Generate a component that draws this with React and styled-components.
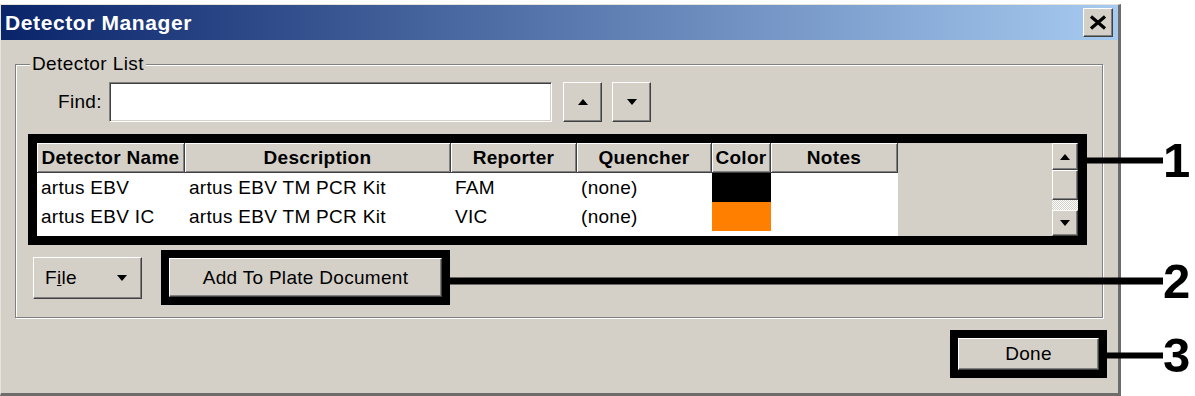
import React from 'react'
import styled, { createGlobalStyle } from 'styled-components'

const columns = [
  { title: 'Detector Name', width: 148 },
  { title: 'Description', width: 266 },
  { title: 'Reporter', width: 126 },
  { title: 'Quencher', width: 135 },
  { title: 'Color', width: 59 },
  { title: 'Notes', width: 127 },
]

const detectors = [
  { name: 'artus EBV', description: 'artus EBV TM PCR Kit', reporter: 'FAM', quencher: '(none)', color: '#000000' },
  { name: 'artus EBV IC', description: 'artus EBV TM PCR Kit', reporter: 'VIC', quencher: '(none)', color: '#ff8000' },
]

const GRID = columns.map((c) => `${c.width}px`).join(' ')

const Callout = ({ number, border = 8, lineTop, lineWidth, thickness = 6, children }) => (
  <CalloutFrame $border={border}>
    {children}
    <Leader $border={border} $top={lineTop}>
      <LeaderLine $width={lineWidth} $thickness={thickness} />
      <LeaderNumber>{number}</LeaderNumber>
    </Leader>
  </CalloutFrame>
)

const App = () => {
  return (
    <Page>
      <GlobalStyle />
      <Window>
        <TitleBar>
          <TitleText>Detector Manager</TitleText>
          <CloseButton>
            <svg width="18" height="15" viewBox="0 0 18 15">
              <path d="M2 1.5 L16 13.5 M16 1.5 L2 13.5" stroke="#000" strokeWidth="3.2" fill="none" />
            </svg>
          </CloseButton>
        </TitleBar>

        <Body>
          <GroupBox>
            <GroupLegend>Detector List</GroupLegend>

            <FindRow>
              <FindLabel>Find:</FindLabel>
              <FindInput readOnly value="" />
              <SpinButton>
                <Arrow $dir="up" />
              </SpinButton>
              <SpinButton>
                <Arrow $dir="down" />
              </SpinButton>
            </FindRow>

            <ListSlot>
              <Callout number="1" border={9} lineTop={17} lineWidth={76} thickness={6}>
                <ListFrame>
                  <TableArea>
                    <Columns>
                      <HeaderRow>
                        {columns.map((c) => (
                          <HeaderCell key={c.title}>{c.title}</HeaderCell>
                        ))}
                      </HeaderRow>
                      {detectors.map((d) => (
                        <DataRow key={d.name}>
                          <DataCell>{d.name}</DataCell>
                          <DataCell>{d.description}</DataCell>
                          <DataCell>{d.reporter}</DataCell>
                          <DataCell>{d.quencher}</DataCell>
                          <Swatch $color={d.color} />
                          <DataCell />
                        </DataRow>
                      ))}
                    </Columns>
                    <Filler />
                  </TableArea>
                  <ScrollBar>
                    <ScrollButton $h={27}>
                      <Arrow $dir="up" />
                    </ScrollButton>
                    <ScrollThumb />
                    <ScrollTrack />
                    <ScrollButton $h={26}>
                      <Arrow $dir="down" />
                    </ScrollButton>
                  </ScrollBar>
                </ListFrame>
              </Callout>
            </ListSlot>

            <ActionRow>
              <FileButton>
                <span>
                  F<u>i</u>le
                </span>
                <Arrow $dir="down" $w={11} />
              </FileButton>
              <Callout number="2" border={8} lineTop={23} lineWidth={713} thickness={7}>
                <PushButton $w={273} $h={39}>Add To Plate Document</PushButton>
              </Callout>
            </ActionRow>
          </GroupBox>

          <FooterRow>
            <Callout number="3" border={8} lineTop={17} lineWidth={56} thickness={6}>
              <PushButton $w={141} $h={32}>Done</PushButton>
            </Callout>
          </FooterRow>
        </Body>
      </Window>
    </Page>
  )
}

export default App

const GlobalStyle = createGlobalStyle`
  html, body {
    margin: 0;
    padding: 0;
    background: #fff;
  }
  body {
    font-family: "Liberation Sans", Arial, sans-serif;
    color: #000;
  }
  * {
    box-sizing: border-box;
  }
`

const Page = styled.div`
  width: 1195px;
  height: 396px;
  padding-top: 4px;
  background: #fff;
  overflow: hidden;
`

const Window = styled.div`
  width: 1121px;
  height: 392px;
  display: flex;
  flex-direction: column;
  background: #d4d0c8;
  border-top: 1px solid #e6e3dc;
  border-left: 1px solid #e6e3dc;
  border-right: 3px solid #6c6c6c;
  border-bottom: 3px solid #6c6c6c;
`

const TitleBar = styled.div`
  height: 35px;
  flex-shrink: 0;
  display: flex;
  align-items: center;
  justify-content: space-between;
  padding: 0 5px 0 4px;
  background: linear-gradient(to right, #0a246a, #a6caf0);
`

const TitleText = styled.div`
  color: #fff;
  font-size: 21px;
  font-weight: bold;
  letter-spacing: 0.6px;
`

const raised = `
  background: #d4d0c8;
  border: 1px solid;
  border-color: #fff #404040 #404040 #fff;
  box-shadow: inset -1px -1px #808080;
`

const CloseButton = styled.div`
  ${raised}
  width: 30px;
  height: 29px;
  display: flex;
  align-items: center;
  justify-content: center;
`

const Body = styled.div`
  flex: 1;
  display: flex;
  flex-direction: column;
`

const GroupBox = styled.fieldset`
  margin: 14px 15px 0 14px;
  padding: 0 0 12px;
  min-inline-size: 0;
  border: 1px solid #808080;
  box-shadow: inset 1px 1px #fff, 1px 1px #fff;
`

const GroupLegend = styled.legend`
  margin-left: 14px;
  padding: 0 2px;
  font-size: 19px;
  line-height: 20px;
  letter-spacing: 0.4px;
  background: #d4d0c8;
`

const FindRow = styled.div`
  display: flex;
  align-items: center;
  margin: 8px 0 0 42px;
  height: 40px;
`

const FindLabel = styled.div`
  width: 43px;
  margin-right: 8px;
  font-size: 19px;
  letter-spacing: 0.3px;
`

const FindInput = styled.input`
  width: 443px;
  height: 40px;
  margin: 0 11px 0 0;
  background: #fff;
  border: 1px solid;
  border-color: #808080 #fff #fff #808080;
  box-shadow: inset 1px 1px #404040, inset -1px -1px #d4d0c8;
  outline: none;
`

const SpinButton = styled.div`
  ${raised}
  width: 39px;
  height: 40px;
  margin-right: 10px;
  display: flex;
  align-items: center;
  justify-content: center;
`

const Arrow = styled.span`
  display: block;
  width: 0;
  height: 0;
  border-left: ${(p) => (p.$w || 10) / 2}px solid transparent;
  border-right: ${(p) => (p.$w || 10) / 2}px solid transparent;
  ${(p) => (p.$dir === 'up' ? 'border-bottom: 6px solid #000;' : 'border-top: 6px solid #000;')}
`

const CalloutFrame = styled.div`
  position: relative;
  border: ${(p) => p.$border}px solid #000;
`

const Leader = styled.div`
  position: absolute;
  left: calc(100% + ${(p) => p.$border}px);
  top: ${(p) => p.$top}px;
  transform: translateY(-50%);
  display: flex;
  align-items: center;
`

const LeaderLine = styled.div`
  width: ${(p) => p.$width}px;
  height: ${(p) => p.$thickness}px;
  background: #000;
`

const LeaderNumber = styled.div`
  font-size: 49px;
  font-weight: bold;
  line-height: 1;
`

const ListSlot = styled.div`
  margin: 12px 0 0 12px;
  width: 1059px;
`

const ListFrame = styled.div`
  display: grid;
  grid-template-columns: 1fr 26px;
  height: 93px;
  background: #d4d0c8;
`

const TableArea = styled.div`
  display: flex;
`

const Columns = styled.div`
  width: 861px;
  background: #fff;
`

const HeaderRow = styled.div`
  display: grid;
  grid-template-columns: ${GRID};
  height: 30px;
  background: #d4d0c8;
`

const HeaderCell = styled.div`
  font-size: 19px;
  font-weight: bold;
  letter-spacing: 0.3px;
  line-height: 29px;
  text-align: center;
  white-space: nowrap;
  border-right: 1px solid #404040;
  border-bottom: 1px solid #404040;
  box-shadow: inset 1px 1px #fff, inset -1px -1px #808080;
`

const DataRow = styled.div`
  display: grid;
  grid-template-columns: ${GRID};
  height: 29px;
`

const DataCell = styled.div`
  padding-left: 4px;
  font-size: 19px;
  letter-spacing: 0.3px;
  line-height: 29px;
  white-space: nowrap;
  overflow: hidden;
`

const Swatch = styled.div`
  background: ${(p) => p.$color};
`

const Filler = styled.div`
  flex: 1;
  background: #d4d0c8;
`

const ScrollBar = styled.div`
  display: flex;
  flex-direction: column;
`

const ScrollButton = styled.div`
  ${raised}
  height: ${(p) => p.$h}px;
  display: flex;
  align-items: center;
  justify-content: center;
`

const ScrollThumb = styled.div`
  ${raised}
  height: 30px;
`

const ScrollTrack = styled.div`
  flex: 1;
  background: repeating-conic-gradient(#fff 0 25%, #d4d0c8 0 50%) 0 0 / 2px 2px;
`

const ActionRow = styled.div`
  display: flex;
  align-items: center;
  margin: 5px 0 0 17px;
`

const FileButton = styled.div`
  ${raised}
  width: 109px;
  height: 42px;
  margin-right: 19px;
  display: flex;
  align-items: center;
  justify-content: space-between;
  padding: 0 14px 0 11px;
  font-size: 19px;
  letter-spacing: 0.3px;
`

const PushButton = styled.div`
  ${raised}
  width: ${(p) => p.$w}px;
  height: ${(p) => p.$h}px;
  display: flex;
  align-items: center;
  justify-content: center;
  font-size: 19px;
  letter-spacing: 0.3px;
`

const FooterRow = styled.div`
  display: flex;
  justify-content: flex-end;
  padding: 12px 11px 0 0;
`
